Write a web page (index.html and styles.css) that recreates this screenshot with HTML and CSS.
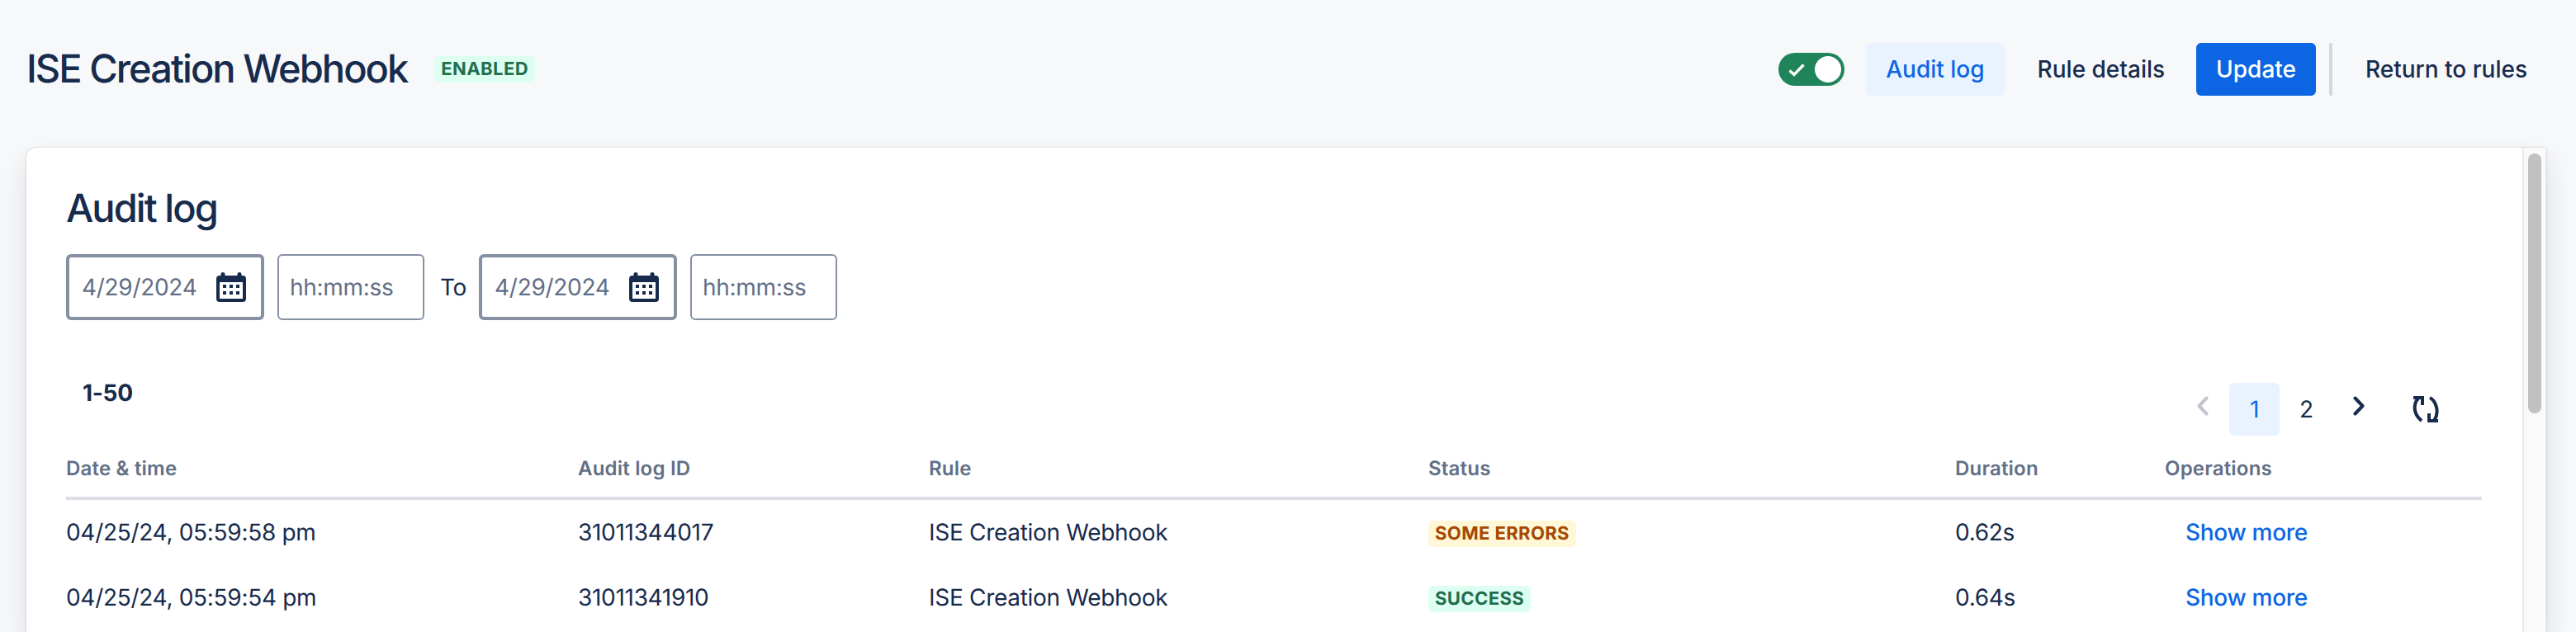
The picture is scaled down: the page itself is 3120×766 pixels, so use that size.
FILE: index.html
```html
<!DOCTYPE html>
<html lang="en">
<head>
  <meta charset="UTF-8" />
  <meta name="viewport" content="width=device-width, initial-scale=1.0"/>
  <title>ISE Creation Webhook</title>
  <link rel="stylesheet" href="styles.css">
</head>
<body>
  <header class="page-header">
    <div class="title-group">
      <h1>ISE Creation Webhook</h1>
      <span class="lozenge lozenge-green">Enabled</span>
    </div>
    <div class="actions">
      <div class="toggle">
        <svg class="toggle-check" viewBox="0 0 20 17" width="20" height="17"><path d="M1.5 9.5 7 14.5 18.5 2.5" fill="none" stroke="#fff" stroke-width="3.4"/></svg>
        <span class="toggle-knob"></span>
      </div>
      <button class="btn btn-selected">Audit log</button>
      <button class="btn">Rule details</button>
      <button class="btn btn-primary">Update</button>
      <span class="divider"></span>
      <button class="btn">Return to rules</button>
    </div>
  </header>

  <main class="card">
    <section class="card-body">
      <h2>Audit log</h2>

      <div class="filters">
        <div class="field field-date">
          <span>4/29/2024</span>
          <svg class="calendar" viewBox="0 0 36 36" width="36" height="36"><path fill="#172B4D" d="M8 0a2.5 2.5 0 0 1 2.5 2.5V4h15V2.500a2.500 2.500 0 0 1 5 0V4H32a4 4 0 0 1 4 4v24a4 4 0 0 1-4 4H4a4 4 0 0 1-4-4V8a4 4 0 0 1 4-4h1.500V2.500A2.500 2.500 0 0 1 8 0Z"/><rect x="4" y="12" width="28" height="20" fill="#fff"/><path fill="#172B4D" d="M8 15h4v4H8zM16 15h4v4h-4zM24 15h4v4h-4zM8 23h4v4H8zM16 23h4v4h-4zM24 23h4v4h-4z"/></svg>
        </div>
        <div class="field field-time">hh:mm:ss</div>
        <span class="filter-to">To</span>
        <div class="field field-date">
          <span>4/29/2024</span>
          <svg class="calendar" viewBox="0 0 36 36" width="36" height="36"><path fill="#172B4D" d="M8 0a2.5 2.5 0 0 1 2.5 2.5V4h15V2.500a2.500 2.500 0 0 1 5 0V4H32a4 4 0 0 1 4 4v24a4 4 0 0 1-4 4H4a4 4 0 0 1-4-4V8a4 4 0 0 1 4-4h1.500V2.500A2.500 2.500 0 0 1 8 0Z"/><rect x="4" y="12" width="28" height="20" fill="#fff"/><path fill="#172B4D" d="M8 15h4v4H8zM16 15h4v4h-4zM24 15h4v4h-4zM8 23h4v4H8zM16 23h4v4h-4zM24 23h4v4h-4z"/></svg>
        </div>
        <div class="field field-time">hh:mm:ss</div>
      </div>

      <div class="toolbar">
        <span class="count">1-50</span>
        <nav class="pagination">
          <span class="page-arrow">
            <svg viewBox="0 0 14 24" width="14" height="24"><path d="M11.500 2.500 2.500 12l9 9.500" fill="none" stroke="#BFC4CE" stroke-width="4" stroke-linecap="round" stroke-linejoin="round"/></svg>
          </span>
          <span class="page page-current">1</span>
          <span class="page">2</span>
          <span class="page-arrow">
            <svg viewBox="0 0 14 24" width="14" height="24"><path d="M2.500 2.500 11.500 12l-9 9.500" fill="none" stroke="#172B4D" stroke-width="4" stroke-linecap="round" stroke-linejoin="round"/></svg>
          </span>
          <span class="refresh">
            <svg viewBox="0 0 32 32" width="32" height="32" fill="none" stroke="#172B4D" stroke-width="4"><path d="M1 2h11v9"/><path d="M7 3C2 8 -1 20 11 30"/><path d="M21 2c6 3 13 16 5 28"/><path d="M31 30H20V21"/></svg>
          </span>
        </nav>
      </div>

      <table class="log-table">
        <colgroup>
          <col class="col-date"><col class="col-id"><col class="col-rule"><col class="col-status"><col class="col-duration"><col>
        </colgroup>
        <thead>
          <tr>
            <th>Date &amp; time</th>
            <th>Audit log ID</th>
            <th>Rule</th>
            <th>Status</th>
            <th>Duration</th>
            <th>Operations</th>
          </tr>
        </thead>
        <tbody>
          <tr>
            <td>04/25/24, 05:59:58 pm</td>
            <td>31011344017</td>
            <td>ISE Creation Webhook</td>
            <td><span class="lozenge lozenge-yellow">Some errors</span></td>
            <td>0.62s</td>
            <td><a class="show-more" href="#">Show more</a></td>
          </tr>
          <tr>
            <td>04/25/24, 05:59:54 pm</td>
            <td>31011341910</td>
            <td>ISE Creation Webhook</td>
            <td><span class="lozenge lozenge-green">Success</span></td>
            <td>0.64s</td>
            <td><a class="show-more" href="#">Show more</a></td>
          </tr>
        </tbody>
      </table>
    </section>

    <div class="scroll-track"><div class="scroll-thumb"></div></div>
  </main>
</body>
</html>
```

FILE: styles.css
```css
* {
  box-sizing: border-box;
}

html, body {
  height: 766px;
  overflow: hidden;
}

body {
  margin: 0;
  font-family: Inter, "Liberation Sans", sans-serif;
  font-size: 28px;
  letter-spacing: -0.3px;
  text-rendering: geometricPrecision;
  color: #172B4D;
  background-color: #F7F8F9;
  display: flex;
  flex-direction: column;
}

.page-header {
  display: flex;
  justify-content: space-between;
  align-items: center;
  padding: 52px 35px 63px 32px;
}

.title-group {
  display: flex;
  align-items: center;
  gap: 33px;
}

h1, h2 {
  margin: 0;
  font-size: 47px;
  font-weight: 500;
  line-height: 56px;
  letter-spacing: -1.95px;
}

.lozenge {
  display: inline-block;
  height: 32px;
  padding: 0 8px;
  border-radius: 6px;
  font-size: 22px;
  font-weight: 700;
  line-height: 32px;
  letter-spacing: 0.4px;
  text-transform: uppercase;
}

.lozenge-green {
  background: #DCFFF1;
  color: #216E4E;
}

.lozenge-yellow {
  background: #FFF7D6;
  color: #A54800;
}

.actions {
  display: flex;
  align-items: center;
  gap: 16px;
}

.toggle {
  width: 80px;
  height: 40px;
  margin-right: 10px;
  padding: 4px;
  border-radius: 20px;
  background: #1F845A;
  display: flex;
  align-items: center;
  justify-content: space-between;
}

.toggle-check {
  margin-left: 8px;
}

.toggle-knob {
  width: 32px;
  height: 32px;
  border-radius: 50%;
  background: white;
}

.btn {
  height: 64px;
  padding: 0 24px;
  border: none;
  border-radius: 6px;
  background: none;
  color: #172B4D;
  font-family: inherit;
  font-size: 28px;
  font-weight: 500;
  letter-spacing: 0;
}

.btn-selected {
  background: #E9F2FF;
  color: #0C66E4;
}

.btn-primary {
  margin-left: -2px;
  background: #0C66E4;
  color: white;
}

.divider {
  width: 4px;
  height: 64px;
  border-radius: 2px;
  background: #D3D6DD;
}

.card {
  flex: 1;
  margin: 0 36px 0 32px;
  display: flex;
  background: white;
  border-radius: 12px 0 0 0;
  box-shadow: 0 16px 32px rgba(9, 30, 66, 0.12), 0 0 2px rgba(9, 30, 66, 0.31);
}

.card-body {
  flex: 1;
  padding: 46px 49px 0 48px;
}

.filters {
  display: flex;
  align-items: center;
  gap: 16px;
  margin-top: 27px;
}

.field {
  height: 80px;
  display: flex;
  align-items: center;
  border-radius: 6px;
  color: #626F86;
}

.field-date {
  width: 240px;
  padding: 0 18px 0 15px;
  border: 4px solid #8590A2;
  justify-content: space-between;
}

.field-time {
  width: 178px;
  padding-left: 13px;
  border: 2px solid #8590A2;
}

.filter-to {
  margin: 0 -1px 0 3px;
}

.toolbar {
  display: flex;
  justify-content: space-between;
  align-items: flex-start;
  margin-top: 76px;
}

.count {
  padding-left: 20px;
  font-weight: 700;
  line-height: 24px;
}

.pagination {
  display: flex;
  align-items: center;
  gap: 2px;
  margin-right: 36px;
}

.page, .page-arrow {
  width: 61px;
  height: 64px;
  border-radius: 6px;
  display: flex;
  align-items: center;
  justify-content: center;
}

.page-arrow svg {
  margin-bottom: 9px;
}

.page-current {
  background: #E9F2FF;
  color: #0C66E4;
}

.refresh {
  width: 64px;
  height: 64px;
  margin-left: 17px;
  display: flex;
  align-items: center;
  justify-content: center;
}

.log-table {
  width: 100%;
  border-collapse: collapse;
  table-layout: fixed;
}

.col-date { width: 620px; }
.col-id { width: 425px; }
.col-rule { width: 605px; }
.col-status { width: 638px; }
.col-duration { width: 254px; }

.log-table th {
  height: 76px;
  padding: 4px 0 0;
  border-bottom: 4px solid #DCDFE4;
  color: #626F86;
  font-size: 24px;
  font-weight: 600;
  letter-spacing: 0.2px;
  text-align: left;
  vertical-align: middle;
}

.log-table td {
  height: 80px;
  padding: 0;
  vertical-align: middle;
}

.show-more {
  margin-left: 25px;
  color: #0C66E4;
  font-weight: 500;
  text-decoration: none;
}

.scroll-track {
  width: 29px;
  padding: 7px 5px 0 5px;
  background: #FAFAFA;
  border-left: 2px solid #E8E8E8;
  border-right: 1px solid #EFEFEF;
}

.scroll-thumb {
  height: 315px;
  border-radius: 8px;
  background: #C1C1C1;
}
```
